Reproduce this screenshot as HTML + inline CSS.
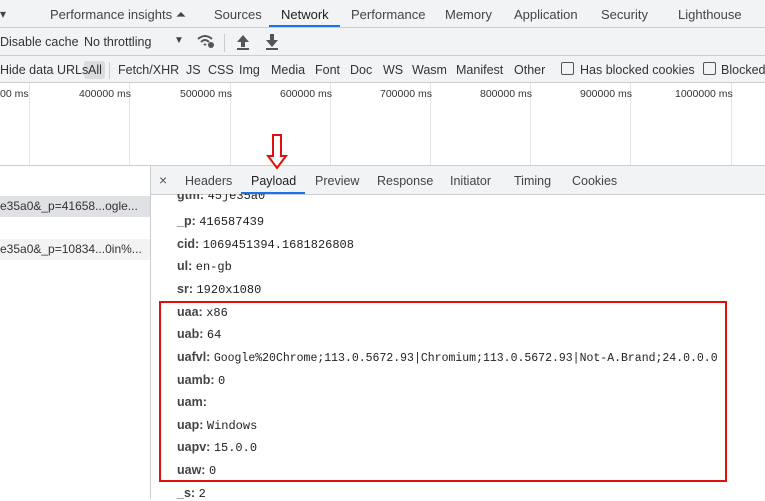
<!DOCTYPE html>
<html><head><style>
body{margin:0;width:765px;height:499px;overflow:hidden;background:#fff;font-family:"Liberation Sans",sans-serif;font-size:12.5px;color:#333;position:relative}
.a{position:absolute;white-space:nowrap}
.bar{position:absolute;left:0;width:765px;background:#f1f3f4;border-bottom:1px solid #cacdd1}
.k{font-weight:bold;color:#444}
.v{font-family:"Liberation Mono",monospace;font-size:12px;color:#222}
.f{position:absolute;top:63px;white-space:nowrap}
</style></head><body>
<div class="bar" style="top:0;height:27px"></div>
<div class="a" style="top:7px;left:50px;color:#444;font-size:13px">Performance insights ⏶</div>
<div class="a" style="top:7px;left:214px;color:#444;font-size:13px">Sources</div>
<div class="a" style="top:7px;left:281px;color:#222;font-size:13px">Network</div>
<div class="a" style="top:25px;left:269px;width:71px;height:2px;background:#1a73e8"></div>
<div class="a" style="top:7px;left:351px;color:#444;font-size:13px">Performance</div>
<div class="a" style="top:7px;left:445px;color:#444;font-size:13px">Memory</div>
<div class="a" style="top:7px;left:514px;color:#444;font-size:13px">Application</div>
<div class="a" style="top:7px;left:601px;color:#444;font-size:13px">Security</div>
<div class="a" style="top:7px;left:678px;color:#444;font-size:13px">Lighthouse</div>
<div class="a" style="top:7px;left:0px;color:#444;font-size:12px">▾</div>
<div class="bar" style="top:28px;height:27px"></div>
<div class="a" style="top:35px;left:0;color:#333">Disable cache</div>
<div class="a" style="top:35px;left:84px;color:#333">No throttling</div>
<div class="a" style="top:35px;left:174px;color:#444;font-size:10px">▼</div>
<svg class="a" style="top:33px;left:196px" width="20" height="16"><path d="M2 6Q9 0 16 6M5 9Q9 5 13 9M8 12Q9 11 10 12" fill="none" stroke="#555" stroke-width="2"/><circle cx="15" cy="12" r="3" fill="#555"/></svg>
<div class="a" style="top:34px;left:224px;width:1px;height:18px;background:#ccc"></div>
<svg class="a" style="top:34px;left:236px" width="14" height="16"><path d="M7 1L13 8H9V13H5V8H1Z" fill="#555"/><rect x="1" y="14" width="12" height="2" fill="#555"/></svg>
<svg class="a" style="top:34px;left:265px" width="14" height="16"><path d="M5 0H9V6H13L7 13L1 6H5Z" fill="#555"/><rect x="1" y="14" width="12" height="2" fill="#555"/></svg>
<div class="bar" style="top:56px;height:26px"></div>
<div class="a" style="top:61px;left:84px;width:21px;height:18px;background:#dadce0;border-radius:3px"></div>
<div class="f" style="left:0;font-size:12.5px">Hide data URLs</div>
<div class="f" style="left:88px">All</div>
<div class="a" style="top:62px;left:109px;width:1px;height:17px;background:#ccc"></div>
<div class="f" style="left:118px">Fetch/XHR</div>
<div class="f" style="left:186px">JS</div>
<div class="f" style="left:208px">CSS</div>
<div class="f" style="left:239px">Img</div>
<div class="f" style="left:271px">Media</div>
<div class="f" style="left:315px">Font</div>
<div class="f" style="left:350px">Doc</div>
<div class="f" style="left:383px">WS</div>
<div class="f" style="left:412px">Wasm</div>
<div class="f" style="left:456px">Manifest</div>
<div class="f" style="left:514px">Other</div>
<div class="a" style="top:62px;left:561px;width:11px;height:11px;border:1px solid #555;border-radius:2px"></div>
<div class="f" style="left:580px">Has blocked cookies</div>
<div class="a" style="top:62px;left:703px;width:11px;height:11px;border:1px solid #555;border-radius:2px"></div>
<div class="f" style="left:721px">Blocked</div>
<!-- timeline -->
<div class="a" style="top:83px;left:29px;width:1px;height:82px;background:#e5e5e5"></div>
<div class="a" style="top:83px;left:129px;width:1px;height:82px;background:#e5e5e5"></div>
<div class="a" style="top:83px;left:230px;width:1px;height:82px;background:#e5e5e5"></div>
<div class="a" style="top:83px;left:330px;width:1px;height:82px;background:#e5e5e5"></div>
<div class="a" style="top:83px;left:430px;width:1px;height:82px;background:#e5e5e5"></div>
<div class="a" style="top:83px;left:530px;width:1px;height:82px;background:#e5e5e5"></div>
<div class="a" style="top:83px;left:630px;width:1px;height:82px;background:#e5e5e5"></div>
<div class="a" style="top:83px;left:731px;width:1px;height:82px;background:#e5e5e5"></div>
<div class="a" style="top:88px;left:0;font-size:10.5px;color:#333">00 ms</div>
<div class="a" style="top:88px;left:79px;font-size:10.5px;color:#333">400000 ms</div>
<div class="a" style="top:88px;left:180px;font-size:10.5px;color:#333">500000 ms</div>
<div class="a" style="top:88px;left:280px;font-size:10.5px;color:#333">600000 ms</div>
<div class="a" style="top:88px;left:380px;font-size:10.5px;color:#333">700000 ms</div>
<div class="a" style="top:88px;left:480px;font-size:10.5px;color:#333">800000 ms</div>
<div class="a" style="top:88px;left:580px;font-size:10.5px;color:#333">900000 ms</div>
<div class="a" style="top:88px;left:675px;font-size:10.5px;color:#333">1000000 ms</div>
<div class="a" style="top:165px;left:0;width:765px;height:1px;background:#cacdd1"></div>
<!-- left list -->
<div class="a" style="top:196px;left:0;width:150px;height:21px;background:#dfe1e5"></div>
<div class="a" style="top:239px;left:0;width:150px;height:21px;background:#f3f3f3"></div>
<div class="a" style="top:199px;left:0;color:#333;font-size:12px">e35a0&amp;_p=41658...ogle...</div>
<div class="a" style="top:242px;left:0;color:#333;font-size:12px">e35a0&amp;_p=10834...0in%...</div>
<div class="a" style="top:166px;left:150px;width:1px;height:333px;background:#cacdd1"></div>
<!-- detail tabs -->
<div class="a" style="top:166px;left:151px;width:614px;height:28px;background:#f1f3f4;border-bottom:1px solid #cacdd1"></div>
<div class="a" style="top:172px;left:159px;font-size:14px;color:#555">×</div>
<div class="a" style="top:174px;left:185px;color:#444">Headers</div>
<div class="a" style="top:174px;left:251px;color:#222">Payload</div>
<div class="a" style="top:192px;left:241px;width:64px;height:2px;background:#1a73e8"></div>
<div class="a" style="top:174px;left:315px;color:#444">Preview</div>
<div class="a" style="top:174px;left:377px;color:#444">Response</div>
<div class="a" style="top:174px;left:450px;color:#444">Initiator</div>
<div class="a" style="top:174px;left:514px;color:#444">Timing</div>
<div class="a" style="top:174px;left:572px;color:#444">Cookies</div>
<svg class="a" style="top:134px;left:266px" width="22" height="36"><path d="M7 1H15V22H20L11 34L2 22H7Z" fill="none" stroke="#e01010" stroke-width="2"/></svg>
<!-- payload -->
<div class="a" style="top:194px;left:151px;width:614px;height:8px;overflow:hidden"><div style="margin-top:-6px;margin-left:26px"><span class="k">gtm:</span> <span class="v">45je35a0</span></div></div>
<div class="a" style="top:214px;left:177px"><span class="k">_p:</span> <span class="v">416587439</span></div>
<div class="a" style="top:237px;left:177px"><span class="k">cid:</span> <span class="v">1069451394.1681826808</span></div>
<div class="a" style="top:259px;left:177px"><span class="k">ul:</span> <span class="v">en-gb</span></div>
<div class="a" style="top:282px;left:177px"><span class="k">sr:</span> <span class="v">1920x1080</span></div>
<div class="a" style="top:305px;left:177px"><span class="k">uaa:</span> <span class="v">x86</span></div>
<div class="a" style="top:327px;left:177px"><span class="k">uab:</span> <span class="v">64</span></div>
<div class="a" style="top:350px;left:177px"><span class="k">uafvl:</span> <span class="v" style="font-size:11.5px">Google%20Chrome;113.0.5672.93|Chromium;113.0.5672.93|Not-A.Brand;24.0.0.0</span></div>
<div class="a" style="top:373px;left:177px"><span class="k">uamb:</span> <span class="v">0</span></div>
<div class="a" style="top:395px;left:177px"><span class="k">uam:</span></div>
<div class="a" style="top:418px;left:177px"><span class="k">uap:</span> <span class="v">Windows</span></div>
<div class="a" style="top:440px;left:177px"><span class="k">uapv:</span> <span class="v">15.0.0</span></div>
<div class="a" style="top:463px;left:177px"><span class="k">uaw:</span> <span class="v">0</span></div>
<div class="a" style="top:486px;left:177px"><span class="k">_s:</span> <span class="v">2</span></div>
<div class="a" style="top:301px;left:159px;width:564px;height:177px;border:2px solid #e01010"></div>
</body></html>
